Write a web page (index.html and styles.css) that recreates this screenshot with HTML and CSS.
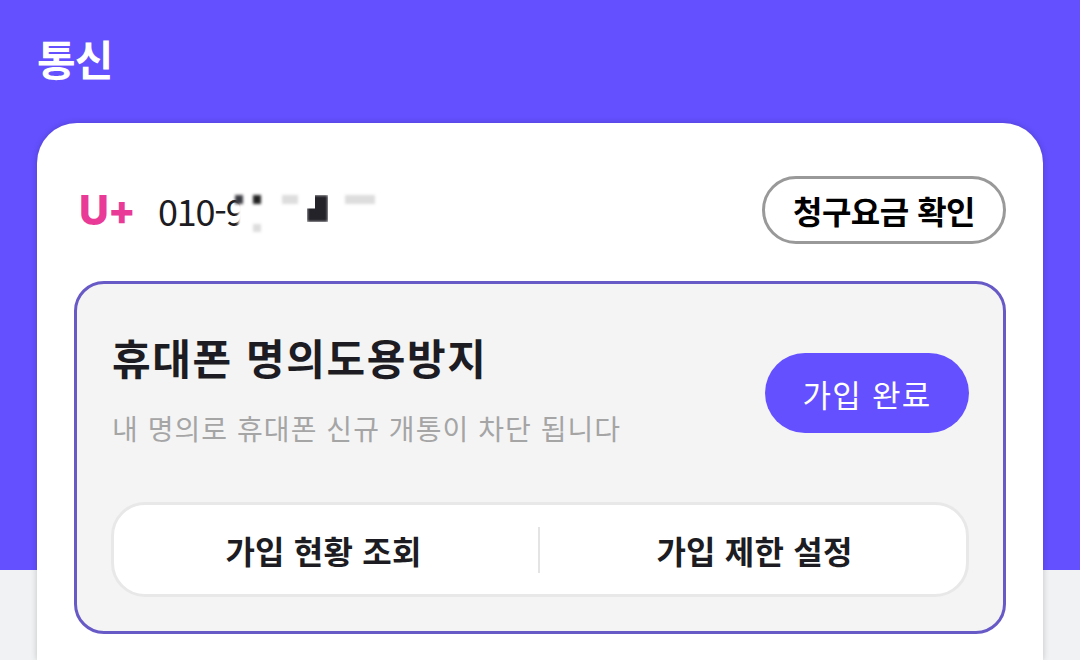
FILE: index.html
```html
<!DOCTYPE html>
<html lang="ko">
<head>
  <meta charset="UTF-8">
  <title>통신</title>
  <link rel="stylesheet" href="styles.css">
</head>
<body>
  <h1 class="page-title">통신</h1>
  <div class="card">
    <div class="line-row">
      <div class="line-info">
        <span class="carrier">U+</span>
        <span class="phone">010-9
          <i class="blur b1"></i><i class="blur b7"></i><i class="blur b2"></i><i class="blur b3"></i><i class="blur b4"></i><i class="blur b5"></i><i class="blur b6"></i>
        </span>
      </div>
      <button class="bill-btn">청구요금 확인</button>
    </div>
    <div class="protect-box">
      <div class="protect-top">
        <div class="protect-text">
          <h2 class="protect-title">휴대폰 명의도용방지</h2>
          <p class="protect-desc">내 명의로 휴대폰 신규 개통이 차단 됩니다</p>
        </div>
        <button class="status-btn">가입 완료</button>
      </div>
      <div class="protect-actions">
        <a class="action">가입 현황 조회</a>
        <a class="action">가입 제한 설정</a>
      </div>
    </div>
  </div>
</body>
</html>
```
FILE: styles.css
```css
* {
  box-sizing: border-box;
}

html, body {
  height: 660px;
  overflow: hidden;
}

body {
  margin: 0;
  padding: 0 37px;
  background: linear-gradient(#6450ff 570px, #f1f2f4 570px);
  font-family: "Noto Sans CJK KR", "Noto Sans", sans-serif;
}

.page-title {
  margin: 0;
  height: 123px;
  padding-top: 31px;
  color: #fff;
  font-size: 42px;
  line-height: 54px;
  font-weight: 700;
  letter-spacing: -1px;
}

.card {
  height: 537px;
  padding: 53px 37px 0;
  background: #fff;
  border-radius: 40px 40px 0 0;
  box-shadow: 0 0 6px rgba(0,0,0,0.2);
}

.line-row {
  display: flex;
  justify-content: space-between;
  align-items: center;
  height: 68px;
}

.line-info {
  display: flex;
  align-items: center;
}

.carrier {
  width: 85px;
  padding-left: 5px;
  color: #e93a97;
  font-family: Inter, sans-serif;
  font-size: 41px;
  font-weight: 800;
  letter-spacing: -1px;
}

.phone {
  position: relative;
  margin-left: -1px;
  color: #1c1c22;
  font-size: 36px;
  font-weight: 400;
  letter-spacing: -1.2px;
}

/* mosaic over the hidden digits */
.blur {
  position: absolute;
  display: block;
  filter: blur(1.5px);
}

.b1 { left: 80px; top: 8px; width: 14px; height: 38px; background: #fff; }
.b7 { left: 77px; top: 11px; width: 8px; height: 9px; background: #3a3a42; }
.b2 { left: 95px; top: 11px; width: 8px; height: 9px; background: #222; }
.b3 { left: 95px; top: 40px; width: 8px; height: 8px; background: #ddd; }
.b4 { left: 124px; top: 11px; width: 16px; height: 9px; background: #ddd; }
.b5 { left: 149px; top: 11px; width: 21px; height: 27px; background: #24232a; clip-path: polygon(38% 0, 100% 0, 100% 100%, 0 100%, 0 50%, 38% 50%); }
.b6 { left: 187px; top: 11px; width: 30px; height: 9px; background: #ddd; }

.bill-btn {
  width: 244px;
  height: 68px;
  padding: 0;
  background: #fff;
  border: 3px solid #999;
  border-radius: 34px;
  color: #000;
  font-family: inherit;
  font-size: 32px;
  font-weight: 700;
  letter-spacing: -0.5px;
}

.protect-box {
  height: 353px;
  margin-top: 37px;
  padding: 0 34px;
  background: #f4f4f5;
  border: 3px solid #6759c6;
  border-radius: 30px;
}

.protect-top {
  display: flex;
  justify-content: space-between;
  align-items: center;
  height: 218px;
}

.protect-text {
  margin: 0 0 10px 1px;
}

.protect-title {
  margin: 0;
  color: #1c1c22;
  font-size: 42px;
  line-height: 56px;
  font-weight: 700;
  letter-spacing: 1.6px;
}

.protect-desc {
  margin: 23px 0 0;
  color: #a5a5a5;
  font-size: 28px;
  line-height: 40px;
  letter-spacing: 1.05px;
}

.status-btn {
  width: 204px;
  height: 80px;
  background: #6450ff;
  border: none;
  border-radius: 40px;
  color: #fff;
  font-family: inherit;
  font-size: 31px;
  letter-spacing: 1.2px;
}

.protect-actions {
  display: flex;
  align-items: center;
  height: 95px;
  background: #fff;
  border: 3px solid #e8e8e8;
  border-radius: 34px;
}

.action {
  flex: 0 0 424px;
  padding-right: 5px;
  color: #1c1c22;
  font-size: 32px;
  font-weight: 700;
  text-align: center;
  letter-spacing: 0.2px;
}

.action + .action {
  flex: 0 0 428px;
  height: 46px;
  line-height: 46px;
  padding: 0 0 0 3px;
  border-left: 2px solid #e4e4e4;
}
```
